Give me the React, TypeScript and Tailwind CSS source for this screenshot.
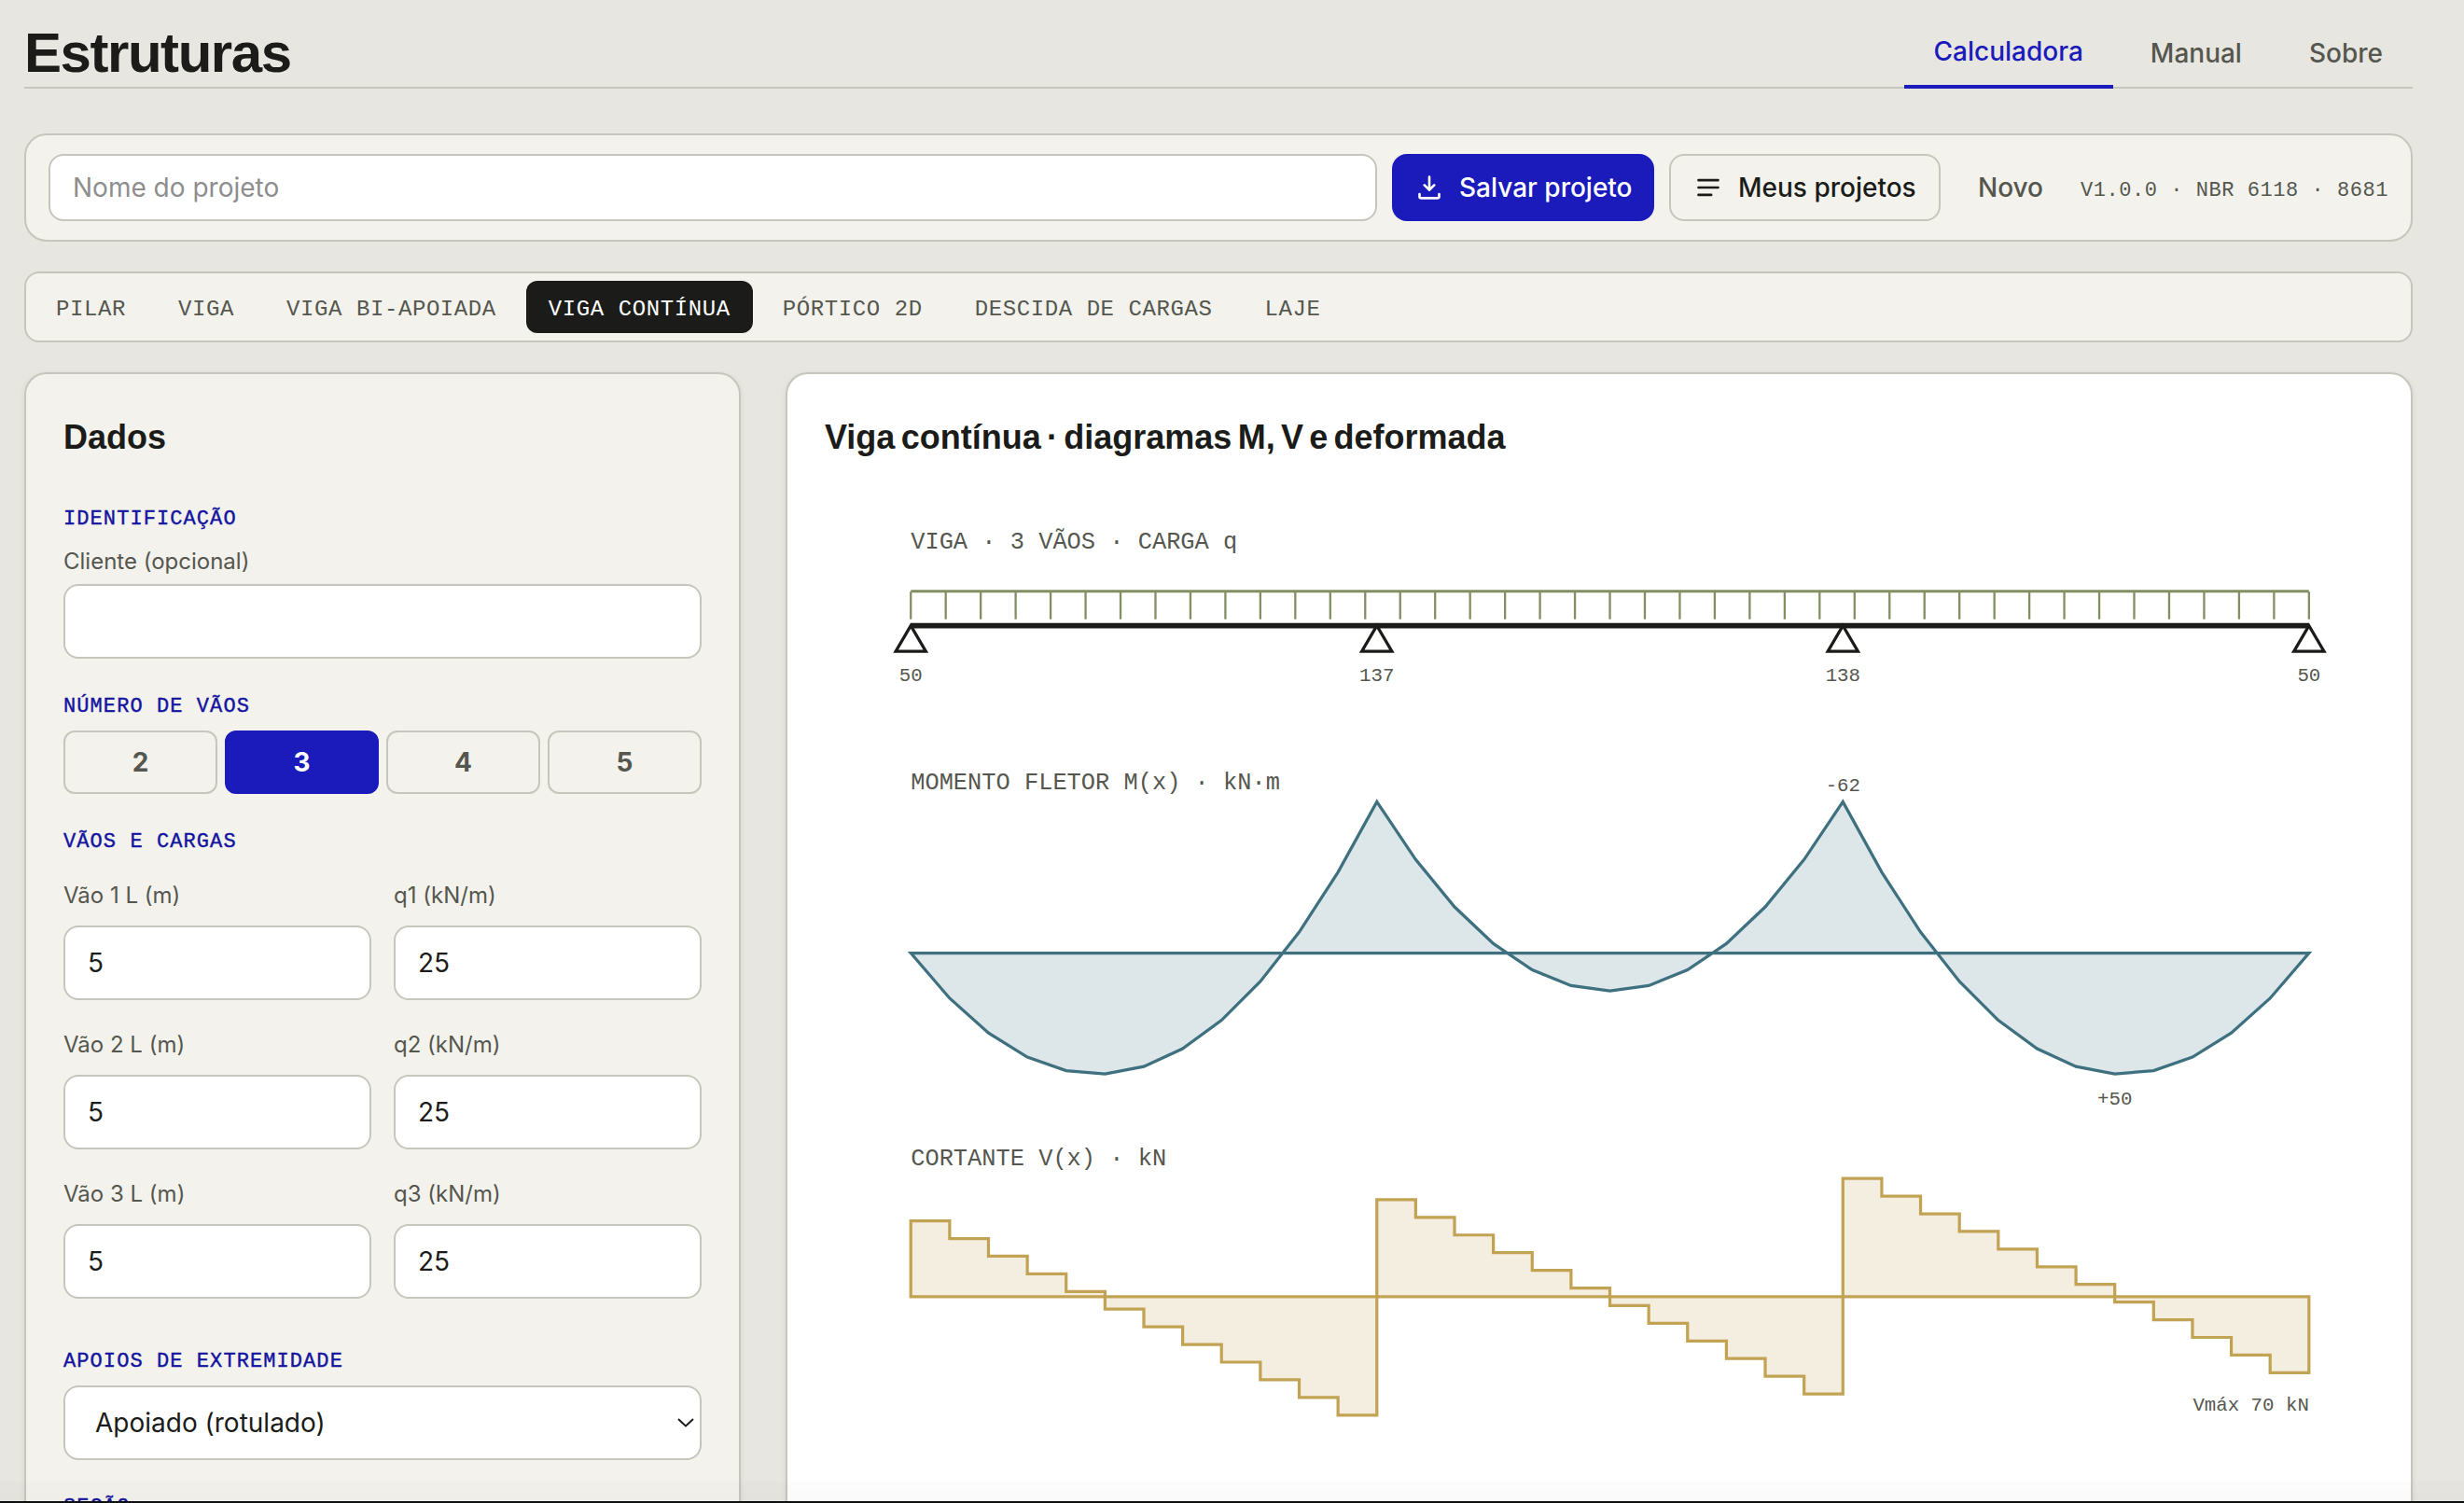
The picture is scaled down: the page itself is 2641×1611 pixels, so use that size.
import React from "react";

const tabs = [
  "PILAR",
  "VIGA",
  "VIGA BI-APOIADA",
  "VIGA CONTÍNUA",
  "PÓRTICO 2D",
  "DESCIDA DE CARGAS",
  "LAJE",
];

const spans = [
  { id: 1, length: 5, load: 25 },
  { id: 2, length: 5, load: 25 },
  { id: 3, length: 5, load: 25 },
];

// Beam geometry in viewBox units
const X0 = 40;
const BEAM = 650;
const SPAN = BEAM / 3;
const SEGMENTS = 12;

// Shear at the left end of every span and moment over its left support
const startShear = [50, 62.5, 75];
const startMoment = [0, -62.5, -62.5];
const reactions = [50, 137, 138, 50];

const M_AXIS = 208;
const M_SCALE = 1.125;
const V_AXIS = 368;
const V_SCALE = 55 / 69.79;

const momentPoints = () => {
  const points: string[] = [];
  for (let s = 0; s < 3; s++) {
    for (let i = 0; i <= SEGMENTS; i++) {
      const x = (i / SEGMENTS) * 5;
      const m = startMoment[s] + startShear[s] * x - 12.5 * x * x;
      const px = X0 + SPAN * (s + i / SEGMENTS);
      points.push(`${px.toFixed(2)},${(M_AXIS + m * M_SCALE).toFixed(2)}`);
    }
  }
  return points.join(" ");
};

const shearPoints = () => {
  const points: string[] = [`${X0},${V_AXIS}`];
  for (let s = 0; s < 3; s++) {
    for (let i = 0; i < SEGMENTS; i++) {
      const v = startShear[s] - 125 * ((i + 0.5) / SEGMENTS);
      const y = (V_AXIS - v * V_SCALE).toFixed(2);
      const left = X0 + SPAN * (s + i / SEGMENTS);
      const right = X0 + SPAN * (s + (i + 1) / SEGMENTS);
      points.push(`${left.toFixed(2)},${y}`, `${right.toFixed(2)},${y}`);
    }
  }
  points.push(`${X0 + BEAM},${V_AXIS}`);
  return points.join(" ");
};

const SectionTitle: React.FC<{ className: string; children: React.ReactNode }> = ({
  className,
  children,
}) => (
  <h3
    className={`h-[26px] whitespace-nowrap font-['Liberation_Mono',monospace] text-[22px] leading-[26px] tracking-[1.08px] text-[#1414a0] [-webkit-text-stroke:0.4px_#1414a0] ${className}`}
  >
    {children}
  </h3>
);

const Diagram: React.FC = () => (
  <svg
    viewBox="0 0 720 470"
    className="mt-[51px] block w-[1660px] font-['Liberation_Mono',monospace]"
  >
    {/* Beam and load */}
    <text x={40} y={19.8} fontSize={11} fill="#55574f">
      VIGA · 3 VÃOS · CARGA q
    </text>
    <line x1={X0} y1={39.8} x2={X0 + BEAM} y2={39.8} stroke="#838f62" strokeWidth={1.4} />
    {Array.from({ length: 41 }, (_, i) => (
      <line
        key={i}
        x1={X0 + i * 16.25}
        y1={40}
        x2={X0 + i * 16.25}
        y2={52.8}
        stroke="#838f62"
        strokeWidth={1}
      />
    ))}
    {reactions.map((r, i) => {
      const x = X0 + SPAN * i;
      return (
        <g key={i}>
          <polygon
            points={`${x},55.8 ${x - 7},67.7 ${x + 7},67.7`}
            fill="#ffffff"
            stroke="#1b1c19"
            strokeWidth={1.4}
          />
          <text x={x} y={81.6} fontSize={9} textAnchor="middle" fill="#55574f">
            {r}
          </text>
        </g>
      );
    })}
    <line x1={X0} y1={55.8} x2={X0 + BEAM} y2={55.8} stroke="#1b1c19" strokeWidth={2.5} />

    {/* Bending moment */}
    <text x={40} y={131.8} fontSize={11} fill="#55574f">
      MOMENTO FLETOR M(x) · kN·m
    </text>
    <polygon
      points={momentPoints()}
      fill="#dde6e8"
      stroke="#3f7080"
      strokeWidth={1.4}
    />
    <text x={X0 + SPAN * 2} y={132.6} fontSize={9} textAnchor="middle" fill="#55574f">
      -62
    </text>
    <text
      x={X0 + SPAN * (2 + 7 / 12)}
      y={278.4}
      fontSize={9}
      textAnchor="middle"
      fill="#55574f"
    >
      +50
    </text>

    {/* Shear */}
    <text x={40} y={306.6} fontSize={11} fill="#55574f">
      CORTANTE V(x) · kN
    </text>
    <polygon
      points={shearPoints()}
      fill="#f4eee1"
      stroke="#c2a354"
      strokeWidth={1.4}
      className="-translate-y-[0.2px]"
    />
    <text x={X0 + BEAM} y={420.6} fontSize={9} textAnchor="end" fill="#55574f">
      Vmáx 70 kN
    </text>
  </svg>
);

const App: React.FC = () => {
  return (
    <div className="relative h-[1611px] w-[2641px] overflow-hidden bg-[#e7e6e1] pl-[26px] font-[Inter,sans-serif] text-[#1b1c19]">
      <div className="w-[2560px]">
        {/* Header */}
        <header className="flex h-[95px] justify-between border-b-2 border-[#c7c6bc]">
          <h1 className="mt-[27px] h-[60px] font-['Liberation_Sans',sans-serif] text-[60px] font-bold leading-[60px] tracking-[-1.45px]">
            Estruturas
          </h1>
          <nav className="-mb-[2px] mt-[18px] flex gap-2 text-[28px] font-medium text-[#55574f]">
            <a className="flex items-center border-b-4 border-[#1b1bbc] px-8 text-[#1b1bbc]">
              Calculadora
            </a>
            <a className="flex items-center px-8">Manual</a>
            <a className="flex items-center px-8">Sobre</a>
          </nav>
        </header>

        {/* Project bar */}
        <div className="mt-12 flex h-[116px] items-center gap-4 rounded-3xl border-2 border-[#c7c6bc] bg-[#f3f2ec] px-6 text-[28px]">
          <input
            placeholder="Nome do projeto"
            className="h-[72px] min-w-0 flex-1 rounded-2xl border-2 border-[#c7c6bc] bg-white px-6 placeholder:text-[#8e8e8e]"
          />
          <button className="flex h-[72px] w-[281px] items-center gap-[18px] whitespace-nowrap rounded-2xl bg-[#1b1bbc] pl-[26px] font-medium text-white">
            <svg
              viewBox="0 0 16 16"
              className="h-7 w-7 shrink-0"
              fill="none"
              stroke="currentColor"
              strokeWidth={1.5}
              strokeLinecap="round"
              strokeLinejoin="round"
            >
              <path d="M8 1.5v8M5 6.5l3 3 3-3M2 12v1.5a1 1 0 0 0 1 1h10a1 1 0 0 0 1-1V12" />
            </svg>
            Salvar projeto
          </button>
          <button className="flex h-[72px] w-[291px] items-center gap-[18px] whitespace-nowrap rounded-2xl border-2 border-[#c7c6bc] pl-[26px] font-medium">
            <svg
              viewBox="0 0 16 16"
              className="h-7 w-7 shrink-0"
              fill="none"
              stroke="currentColor"
              strokeWidth={1.5}
              strokeLinecap="round"
            >
              <path d="M2 3.5h12M2 8h12M2 12.5h7.8" />
            </svg>
            Meus projetos
          </button>
          <button className="w-[118px] text-center font-medium text-[#55574f]">
            Novo
          </button>
          <span className="w-[330px] whitespace-nowrap pt-[7px] font-['Liberation_Mono',monospace] text-[22px] tracking-[0.55px] text-[#55574f]">
            V1.0.0 · NBR 6118 · 8681
          </span>
        </div>

        {/* Module tabs */}
        <div className="mt-8 flex h-[76px] items-center gap-2 rounded-2xl border-2 border-[#c7c6bc] bg-[#f3f2ec] px-2 font-['Liberation_Mono',monospace] text-2xl tracking-[0.59px] text-[#55574f]">
          {tabs.map((tab) => (
            <button
              key={tab}
              className={`h-14 whitespace-nowrap rounded-xl px-6 pt-[5px] ${
                tab === "VIGA CONTÍNUA" ? "bg-[#1b1c19] text-white" : ""
              }`}
            >
              {tab}
            </button>
          ))}
        </div>

        <div className="mt-8 flex gap-12">
          {/* Input data */}
          <section className="h-[1400px] w-[768px] rounded-3xl border-2 border-[#c7c6bc] bg-[#f3f2ec] px-10 pt-[46px] shadow-[0_2px_6px_rgba(27,28,25,0.08)]">
            <h2 className="font-['Liberation_Sans',sans-serif] text-4xl font-bold leading-[44px]">
              Dados
            </h2>

            <SectionTitle className="mt-[53px]">IDENTIFICAÇÃO</SectionTitle>
            <label className="mt-[17px] block text-2xl leading-[30px] text-[#55574f]">
              Cliente (opcional)
            </label>
            <input className="mt-[9px] block h-20 w-full rounded-2xl border-2 border-[#c7c6bc] bg-white px-6 text-[28px]" />

            <SectionTitle className="mt-[39px]">NÚMERO DE VÃOS</SectionTitle>
            <div className="mt-[12px] grid grid-cols-4 gap-2">
              {[2, 3, 4, 5].map((n) => (
                <button
                  key={n}
                  className={`h-[68px] rounded-xl border-2 text-[28px] font-bold ${
                    n === 3
                      ? "border-[#1b1bbc] bg-[#1b1bbc] text-white"
                      : "border-[#c7c6bc] text-[#55574f]"
                  }`}
                >
                  {n}
                </button>
              ))}
            </div>

            <SectionTitle className="mt-[39px]">VÃOS E CARGAS</SectionTitle>
            <div className="mt-[29px] grid grid-cols-2 gap-x-6 gap-y-[33px]">
              {spans.map((span) => (
                <React.Fragment key={span.id}>
                  <label className="block text-2xl leading-[30px] text-[#55574f]">
                    Vão {span.id} L (m)
                    <input
                      defaultValue={span.length}
                      className="mt-[17px] block h-20 w-full rounded-2xl border-2 border-[#c7c6bc] bg-white px-6 text-[28px] text-[#1b1c19]"
                    />
                  </label>
                  <label className="block text-2xl leading-[30px] text-[#55574f]">
                    q{span.id} (kN/m)
                    <input
                      defaultValue={span.load}
                      className="mt-[17px] block h-20 w-full rounded-2xl border-2 border-[#c7c6bc] bg-white px-6 text-[28px] text-[#1b1c19]"
                    />
                  </label>
                </React.Fragment>
              ))}
            </div>

            <SectionTitle className="mt-[55px]">APOIOS DE EXTREMIDADE</SectionTitle>
            <div className="mt-[12px] flex h-20 items-center justify-between rounded-2xl border-2 border-[#c7c6bc] bg-white pl-8 pr-[6px] text-[28px]">
              Apoiado (rotulado)
              <svg
                viewBox="0 0 18 10"
                className="h-[10px] w-[18px]"
                fill="none"
                stroke="currentColor"
                strokeWidth={2}
              >
                <path d="M1 1l8 7.5L17 1" />
              </svg>
            </div>

            <SectionTitle className="mt-[38px]">SEÇÃO</SectionTitle>
          </section>

          {/* Diagrams */}
          <section className="h-[1400px] w-[1744px] rounded-3xl border-2 border-[#c7c6bc] bg-white px-10 pt-[46px] shadow-[0_2px_6px_rgba(27,28,25,0.08)]">
            <h2 className="font-['Liberation_Sans',sans-serif] text-4xl font-bold leading-[44px] [word-spacing:-3.7px]">
              Viga contínua · diagramas M, V e deformada
            </h2>
            <Diagram />
          </section>
        </div>
      </div>

      {/* Bottom edge */}
      <div className="absolute inset-x-0 bottom-0 h-6 border-b-2 border-[#0c0f0e] bg-gradient-to-b from-black/[0.01] to-black/[0.02]" />
    </div>
  );
};

export default App;
